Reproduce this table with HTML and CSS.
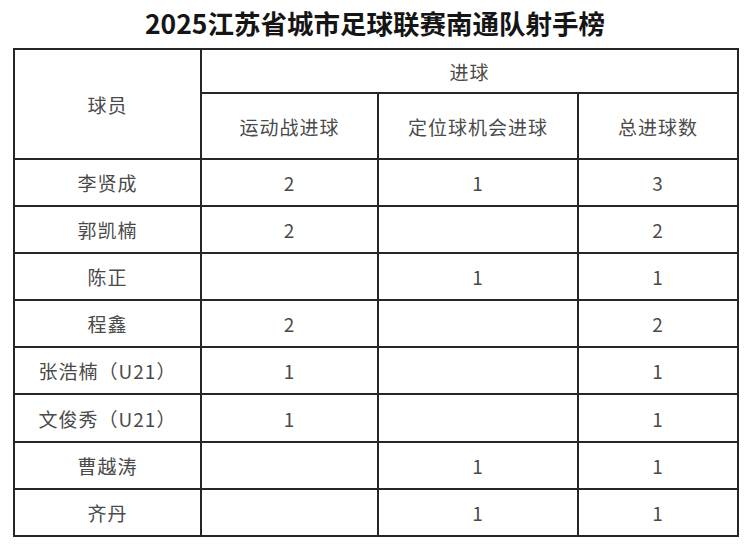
FILE: index.html
```html
<!DOCTYPE html>
<html lang="zh-CN">
<head>
<meta charset="utf-8">
<title>2025江苏省城市足球联赛南通队射手榜</title>
<link rel="stylesheet" href="styles.css">
</head>
<body>
<div class="page">
  <h1 class="title">2025江苏省城市足球联赛南通队射手榜</h1>
  <table class="board">
    <colgroup>
      <col class="c1"><col class="c2"><col class="c3"><col class="c4">
    </colgroup>
    <thead>
      <tr class="h1">
        <th rowspan="2">球员</th>
        <th colspan="3">进球</th>
      </tr>
      <tr class="h2">
        <th>运动战进球</th>
        <th>定位球机会进球</th>
        <th>总进球数</th>
      </tr>
    </thead>
    <tbody>
      <tr><td>李贤成</td><td>2</td><td>1</td><td>3</td></tr>
      <tr><td>郭凯楠</td><td>2</td><td></td><td>2</td></tr>
      <tr><td>陈正</td><td></td><td>1</td><td>1</td></tr>
      <tr><td>程鑫</td><td>2</td><td></td><td>2</td></tr>
      <tr><td>张浩楠（U21）</td><td>1</td><td></td><td>1</td></tr>
      <tr><td>文俊秀（U21）</td><td>1</td><td></td><td>1</td></tr>
      <tr><td>曹越涛</td><td></td><td>1</td><td>1</td></tr>
      <tr><td>齐丹</td><td></td><td>1</td><td>1</td></tr>
    </tbody>
  </table>
</div>
</body>
</html>
```

FILE: styles.css
```css
html, body {
  margin: 0;
  padding: 0;
  background: #ffffff;
}

.page {
  width: 750px;
  height: 545px;
  font-family: "Noto Sans CJK SC", "Noto Sans", sans-serif;
}

.title {
  margin: 0;
  height: 48px;
  line-height: 46px;
  text-align: center;
  font-size: 26.5px;
  font-weight: 700;
  color: #151515;
}

.board {
  margin-left: 13px;
  width: 724px;
  border-collapse: collapse;
  table-layout: fixed;
  color: #4a4a4a;
  font-size: 19px;
  letter-spacing: 1px;
}

.c1 { width: 187px; }
.c2 { width: 177px; }
.c3 { width: 200px; }
.c4 { width: 160px; }

.board th,
.board td {
  border: 2px solid #262626;
  padding: 0;
  text-align: center;
  vertical-align: middle;
  font-weight: 400;
  line-height: 1;
}

.h1 th { height: 42px; }
.h2 th { height: 64px; }
.board tbody td { height: 45.1px; }
```
